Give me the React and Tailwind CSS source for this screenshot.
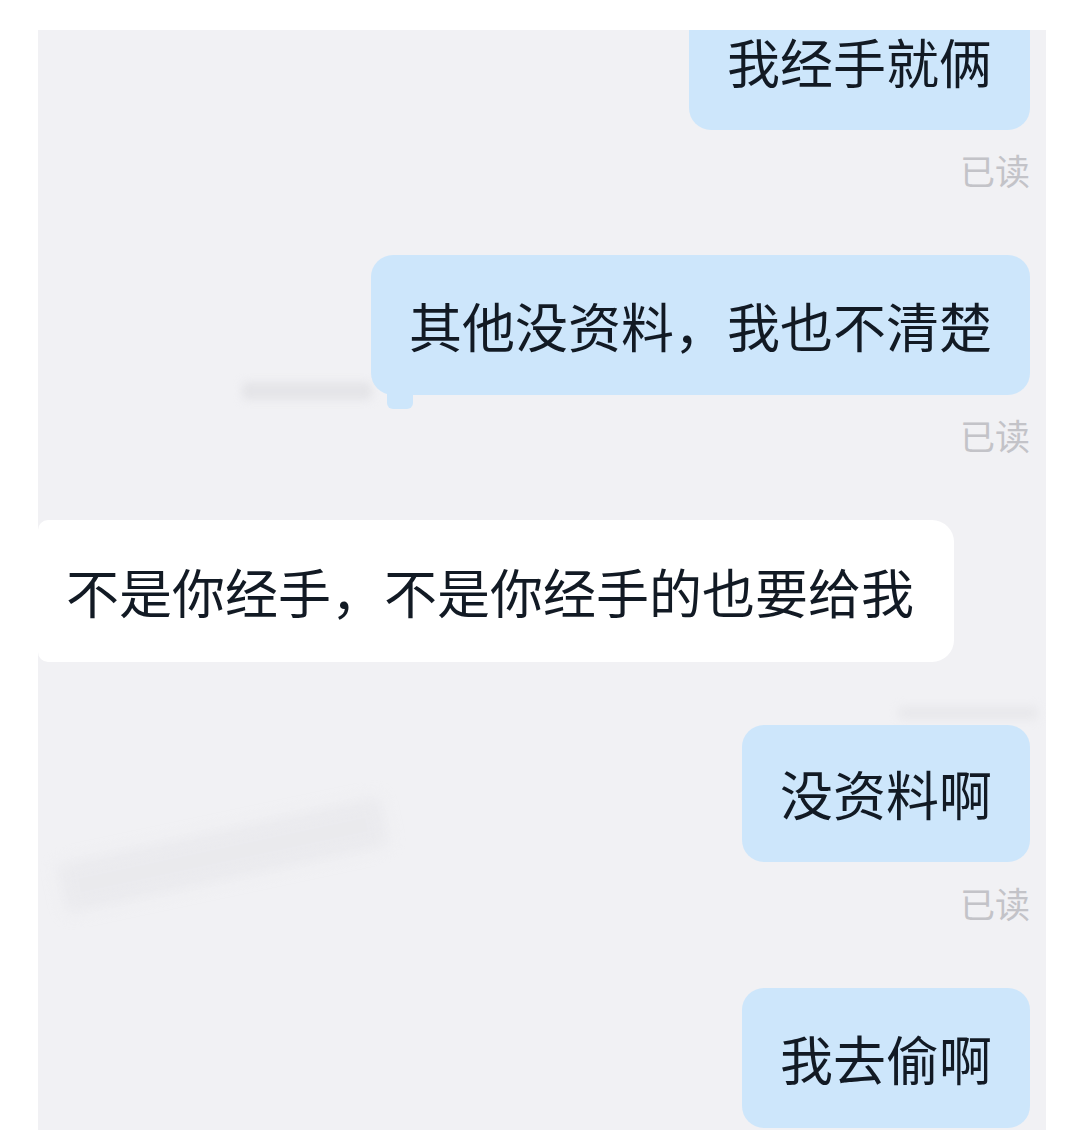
const font = { fontFamily: '"Noto Sans CJK SC", "Noto Sans", sans-serif' };

function Mine({ text, className = "", tail = false }) {
  return (
    <div className="flex justify-end">
      <div className={`relative flex items-center rounded-[22px] bg-[#cde6fb] px-[38px] text-[53px] leading-none text-[#121a24] ${className}`}>
        {text}
        {tail && (
          <span className="absolute bottom-[-14px] left-[16px] h-[18px] w-[26px] rounded-b-[6px] bg-[#cde6fb]" />
        )}
      </div>
    </div>
  );
}

function Read({ className = "" }) {
  return (
    <div className={`flex justify-end text-[35px] leading-[40px] text-[#c3c3c8] ${className}`}>已读</div>
  );
}

export default function App() {
  return (
    <div className="min-h-screen bg-white pt-[30px] pl-[38px] pr-[25px]" style={font}>
      <div className="relative h-[1100px] overflow-hidden bg-[#f1f1f4] pr-[16px]">
        {/* blurred leftovers of redacted names */}
        <div className="absolute left-[204px] top-[352px] h-[18px] w-[130px] rounded-sm bg-[#dcdce0] opacity-60 blur-[5px]" />
        <div className="absolute left-[860px] top-[676px] h-[14px] w-[140px] rounded-sm bg-[#dcdce0] opacity-40 blur-[5px]" />
        <div className="absolute left-[20px] top-[800px] h-[50px] w-[330px] -rotate-[12deg] rounded-sm bg-[#e4e4e8] opacity-50 blur-[8px]" />

        <div className="relative flex flex-col">
          <Mine text="我经手就俩" className="mt-[-38px] h-[138px]" />
          <Read className="mt-[20px]" />

          <Mine text="其他没资料，我也不清楚" className="mt-[65px] h-[140px]" tail />
          <Read className="mt-[20px]" />

          <div className="mt-[65px] flex">
            <div className="flex h-[142px] items-center rounded-r-[22px] rounded-l-[10px] bg-white pl-[28px] pr-[40px] text-[53px] leading-none text-[#121a24]">
              不是你经手，不是你经手的也要给我
            </div>
          </div>

          <Mine text="没资料啊" className="mt-[63px] h-[137px]" />
          <Read className="mt-[21px]" />

          <Mine text="我去偷啊" className="mt-[65px] h-[140px]" />
        </div>
      </div>
    </div>
  );
}
